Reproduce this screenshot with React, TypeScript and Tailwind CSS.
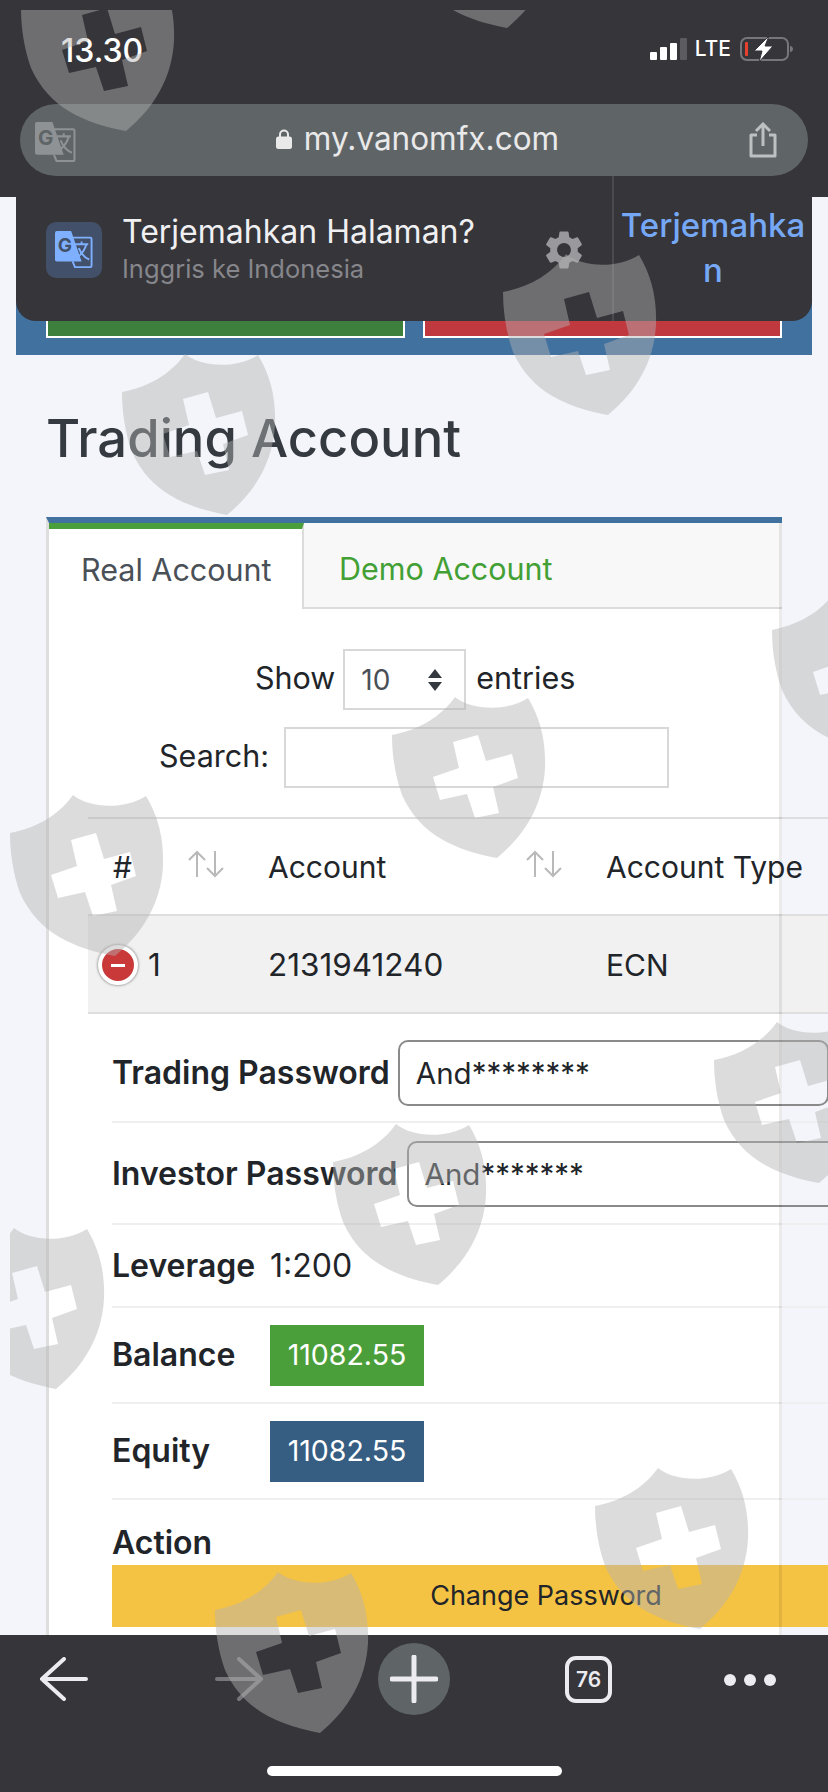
import React from 'react';
import { MdSettings } from 'react-icons/md';

const shields = [
  [9, -37], [390, -140], [110, 347], [491, 247], [380, 690], [760, 585],
  [-2, 788], [702, 1015], [321, 1117], [-61, 1221], [583, 1461], [203, 1565],
];

const TranslateIcon = ({ back, front, glyph, className }: { back: string; front: string; glyph: string; className: string }) => (
  <svg viewBox="0 0 40 40" className={className}>
    <path d="M2 0H17L28 32H2a2 2 0 0 1-2-2V2a2 2 0 0 1 2-2Z" fill={back} />
    <text x="3" y="22" fontSize="20" fontWeight="700" fontFamily="Inter, sans-serif" fill={glyph}>G</text>
    <path d="M18 7H37a1.500 1.500 0 0 1 1.500 1.500V36.500A1.500 1.500 0 0 1 37 38H21L18.500 32" fill="none" stroke={front} strokeWidth="2" />
    <path d="M21 14H35M28 11V14M33 14C31 21 27 26 21 29M25 18C27 23 31 28 36 30" fill="none" stroke={front} strokeWidth="2" />
  </svg>
);

const SortIcon = () => (
  <svg viewBox="0 0 36 28" className="w-[36px] h-[28px] mb-[8px]" fill="none" stroke="#b9b9b9" strokeWidth="2">
    <path d="M9 27V2M1 10L9 2L17 10" />
    <path d="M27 1V26M19 18L27 26L35 18" />
  </svg>
);

const Watermarks = () => (
  <svg
    viewBox="10 10 818 1782"
    className="absolute left-[10px] top-[10px] w-[818px] h-[1782px] pointer-events-none z-30"
  >
    {shields.map(([x, y]) => (
      <path
        key={`${x}-${y}`}
        transform={`translate(${x} ${y})`}
        fillRule="evenodd"
        fill="rgb(178,178,178)"
        fillOpacity="0.46"
        d="M12 45C38 40 60 28 75 7C88 18 122 24 148 8C160 28 166 50 165 78C163 115 145 145 117 168C75 160 40 145 22 105C15 85 12 65 12 45ZM73 52L98 45L106 71L132 64L138 88L113 97L119 123L95 128L87 104L60 110L53 87L79 78Z"
      />
    ))}
  </svg>
);

const StatusBar = () => (
  <div className="h-[104px] relative">
    <div className="absolute left-[61px] top-[31px] text-[32px] leading-[40px] font-medium text-white">13.30</div>
    <div className="absolute right-[34px] top-[36px] flex items-end h-[26px]">
      <div className="flex items-end gap-[3px] mb-[2px]">
        <div className="w-[7px] h-[8px] rounded-[1px] bg-white" />
        <div className="w-[7px] h-[13px] rounded-[1px] bg-white" />
        <div className="w-[7px] h-[17px] rounded-[1px] bg-white" />
        <div className="w-[7px] h-[22px] rounded-[1px] bg-[#5c5c60]" />
      </div>
      <div className="ml-[8px] text-[21px] leading-[26px] font-medium text-white">LTE</div>
      <svg viewBox="0 0 54 26" className="ml-[9px] w-[54px] h-[26px]">
        <rect x="1" y="2" width="47" height="22" rx="6" fill="none" stroke="#77777b" strokeWidth="2" />
        <rect x="5" y="6" width="3" height="14" rx="1" fill="#e8412f" />
        <path d="M50 10c2 0 3 1.500 3 3s-1 3-3 3Z" fill="#77777b" />
        <path d="M29 0L14 15H22L19 26L33 10H25Z" fill="#fff" stroke="#35353a" strokeWidth="1" />
      </svg>
    </div>
  </div>
);

const UrlBar = () => (
  <div className="mx-[20px] h-[72px] rounded-[36px] bg-[#5f6467] flex items-center justify-between pl-[15px] pr-[31px]">
    <TranslateIcon back="#8e9294" front="#8e9294" glyph="#5f6467" className="w-[41px] h-[41px] mt-[4px]" />
    <div className="flex items-center gap-[12px] ml-[10px] mb-[2px] text-[31.500px] leading-[40px] text-[#e9e9ea]">
      <svg viewBox="0 0 16 20" className="w-[16px] h-[20px]">
        <path d="M4 8V5.500a4 4 0 0 1 8 0V8" fill="none" stroke="#e9e9ea" strokeWidth="2" />
        <rect y="7.500" width="16" height="12.500" rx="2.500" fill="#e9e9ea" />
      </svg>
      my.vanomfx.com
    </div>
    <svg viewBox="0 0 28 36" className="w-[28px] h-[36px]" fill="none" stroke="#bcc0c1" strokeWidth="3">
      <path d="M8 13H2V34H26V13H20" strokeLinejoin="round" />
      <path d="M14 24V2M7 9L14 2L21 9" />
    </svg>
  </div>
);

const TranslateBanner = () => (
  <div className="absolute left-[16px] top-[176px] w-[796px] h-[145px] rounded-b-[20px] bg-[#35353a] flex z-20">
    <div className="w-[596px] flex items-center pl-[30px] pt-[2px]">
      <div className="w-[56px] h-[56px] rounded-[10px] bg-[#435069] flex items-center justify-center">
        <TranslateIcon back="#7fb0ff" front="#7fb0ff" glyph="#435069" className="w-[38px] h-[38px]" />
      </div>
      <div className="ml-[20px]">
        <div className="text-[32px] leading-[38px] text-[#f0f0f2]">Terjemahkan Halaman?</div>
        <div className="text-[25.500px] leading-[36px] text-[#86868b]">Inggris ke Indonesia</div>
      </div>
      <MdSettings className="ml-auto mr-[25px] text-[#98989d]" size={46} />
    </div>
    <div className="flex-1 border-l-2 border-[#4a4a4f] flex items-center justify-center pb-[2px]">
      <div className="w-[194px] break-all text-center text-[33px] leading-[45px] font-medium text-[#76a8f5]">
        Terjemahkan
      </div>
    </div>
  </div>
);

const DetailRow = ({ label, labelClass, className, children }: { label: string; labelClass?: string; className: string; children: React.ReactNode }) => (
  <div className={`flex items-center border-b-2 border-[#efefef] ${className}`}>
    <div className={`text-[32px] leading-[40px] font-semibold text-[#212529] whitespace-nowrap ${labelClass || ''}`}>{label}</div>
    {children}
  </div>
);

const App = () => {
  return (
    <div
      className="relative w-[828px] h-[1792px] overflow-hidden flex flex-col bg-[#f4f5fa] text-[#212529]"
      style={{ fontFamily: 'Inter, "Liberation Sans", sans-serif' }}
    >
      <Watermarks />

      {/* Browser top */}
      <div className="h-[197px] shrink-0 bg-[#35353a]">
        <StatusBar />
        <UrlBar />
      </div>
      <TranslateBanner />

      {/* Page */}
      <div className="flex-1 overflow-hidden">
        <div className="mx-[16px] h-[158px] bg-[#41719f] flex items-end gap-[18px] px-[30px] pb-[17px]">
          <div className="flex-1 h-[60px] bg-[#3d7f3c] border-2 border-white" />
          <div className="flex-1 h-[60px] bg-[#c0393f] border-2 border-white" />
        </div>

        <div className="ml-[46px] w-[736px]">
          <div className="h-[162px] pt-[4px] flex items-center text-[52.500px] leading-[64px] font-medium text-[#343a40] whitespace-nowrap">
            Trading Account
          </div>

          <div className="relative bg-white border-t-[6px] border-l-[3px] border-[#41719f] border-l-[#dedede] h-[1200px]">
            <div className="absolute right-0 top-0 bottom-0 w-[3px] bg-black/[0.08] z-10" />

            <div className="flex h-[86px] text-[30.500px]">
              <div className="w-[255px] border-t-[6px] border-[#4b9f3b] border-r-2 border-r-[#dcdcdc] flex items-center pl-[32px] pt-[2px] text-[#495057]">
                Real Account
              </div>
              <div className="flex-1 bg-[#f8f8f8] border-b-2 border-[#dcdcdc] flex items-center pl-[35px] pt-[8px] text-[#43a035]">
                Demo Account
              </div>
            </div>

            <div className="mt-[40px] flex items-center h-[61px] pl-[206px] text-[30.500px]">
              <span className="mb-[3px]">Show</span>
              <div className="ml-[8px] w-[123px] h-[61px] border-2 border-[#d8d8d8] flex items-center justify-between pl-[16px] pr-[21px] text-[28px] text-[#495057]">
                10
                <svg viewBox="0 0 16 24" className="w-[16px] h-[24px]">
                  <path d="M8 1L15 10H1Z M8 23L1 14H15Z" fill="#343a40" />
                </svg>
              </div>
              <span className="ml-[10px] mb-[3px]">entries</span>
            </div>

            <div className="mt-[17px] flex items-center h-[61px] pl-[110px] text-[30.500px]">
              <span className="mb-[3px]">Search:</span>
              <div className="ml-[15px] w-[385px] h-[61px] border-2 border-[#d8d8d8]" />
            </div>

            {/* Table */}
            <div className="mt-[29px] ml-[39px] w-[740px]">
              <div className="flex h-[99px] pt-[2px] items-center border-y-2 border-[#dedede] text-[30px]">
                <div className="w-[157px] pl-[25px] pr-[21px] flex items-center justify-between">
                  #
                  <SortIcon />
                </div>
                <div className="w-[338px] pl-[23px] pr-[21px] flex items-center justify-between">
                  Account
                  <SortIcon />
                </div>
                <div className="pl-[23px] whitespace-nowrap">Account Type</div>
              </div>
              <div className="flex h-[98px] pt-[2px] items-center bg-[#f1f1f2] border-b-2 border-[#dedede] text-[30px]">
                <div className="w-[157px] flex items-center pl-[10px]">
                  <div className="w-[40px] h-[40px] rounded-full bg-[#c9393a] border-[4px] border-white shadow-[0_0_3px_rgba(0,0,0,0.6)] flex items-center justify-center">
                    <div className="w-[14px] h-[3px] bg-white" />
                  </div>
                  <span className="ml-[10px] text-[31.500px]">1</span>
                </div>
                <div className="w-[338px] pl-[23px] text-[31.500px]">2131941240</div>
                <div className="pl-[23px]">ECN</div>
              </div>
            </div>

            {/* Detail */}
            <div className="ml-[63px] w-[716px]">
              <DetailRow label="Trading Password" className="pt-[26px] pb-[15px]">
                <div className="ml-[8px] w-[431px] h-[66px] shrink-0 rounded-[10px] border-2 border-[#8a8a8a] flex items-center pl-[16px] text-[29.500px]">
                  And********
                </div>
              </DetailRow>
              <DetailRow label="Investor Password" className="pt-[18px] pb-[16px]">
                <div className="ml-[9px] w-[450px] h-[66px] shrink-0 rounded-[10px] border-2 border-[#8a8a8a] flex items-center pl-[16px] text-[29.500px]">
                  And*******
                </div>
              </DetailRow>
              <DetailRow label="Leverage" labelClass="w-[158px]" className="h-[83px]">
                <span className="text-[32px]">1:200</span>
              </DetailRow>
              <DetailRow label="Balance" labelClass="w-[158px]" className="h-[96px]">
                <div className="w-[154px] h-[61px] bg-[#4b9f3b] flex items-center justify-center text-[28.500px] text-white">
                  11082.55
                </div>
              </DetailRow>
              <DetailRow label="Equity" labelClass="w-[158px]" className="h-[96px]">
                <div className="w-[154px] h-[61px] bg-[#365d82] flex items-center justify-center text-[28.500px] text-white">
                  11082.55
                </div>
              </DetailRow>
              <div className="h-[65px] flex items-center pt-[20px] text-[32px] font-semibold">Action</div>
              <div className="w-[868px] h-[62px] bg-[#f5c343] flex items-center justify-center text-[27px]">
                Change Password
              </div>
            </div>
          </div>
        </div>
      </div>

      {/* Browser bottom */}
      <div className="h-[157px] shrink-0 bg-[#35353a] flex flex-col items-center">
        <div className="w-full h-[90px] relative">
          <svg viewBox="0 0 48 44" className="absolute left-[40px] top-[22px] w-[48px] h-[44px]" fill="none" stroke="#ebebf0" strokeWidth="4" strokeLinecap="round">
            <path d="M2 22H46M24 2L2 22L24 42" />
          </svg>
          <svg viewBox="0 0 48 44" className="absolute left-[215px] top-[22px] w-[48px] h-[44px]" fill="none" stroke="#77777b" strokeWidth="4" strokeLinecap="round">
            <path d="M2 22H46M24 2L46 22L24 42" />
          </svg>
          <div className="absolute left-[378px] top-[8px] w-[72px] h-[72px] rounded-full bg-[#5f6467] flex items-center justify-center">
            <svg viewBox="0 0 48 48" className="w-[48px] h-[48px]" fill="none" stroke="#ebebf0" strokeWidth="5" strokeLinecap="round">
              <path d="M24 2V46M2 24H46" />
            </svg>
          </div>
          <div className="absolute left-[565px] top-[21px] w-[47px] h-[47px] rounded-[11px] border-[4px] border-[#ebebf0] flex items-center justify-center text-[21px] font-semibold text-[#ebebf0]">
            76
          </div>
          <div className="absolute left-[724px] top-[39px] flex gap-[8px]">
            <div className="w-[12px] h-[12px] rounded-full bg-[#ebebf0]" />
            <div className="w-[12px] h-[12px] rounded-full bg-[#ebebf0]" />
            <div className="w-[12px] h-[12px] rounded-full bg-[#ebebf0]" />
          </div>
        </div>
        <div className="mt-[41px] w-[295px] h-[10px] rounded-full bg-white" />
      </div>
    </div>
  );
};

export default App;
